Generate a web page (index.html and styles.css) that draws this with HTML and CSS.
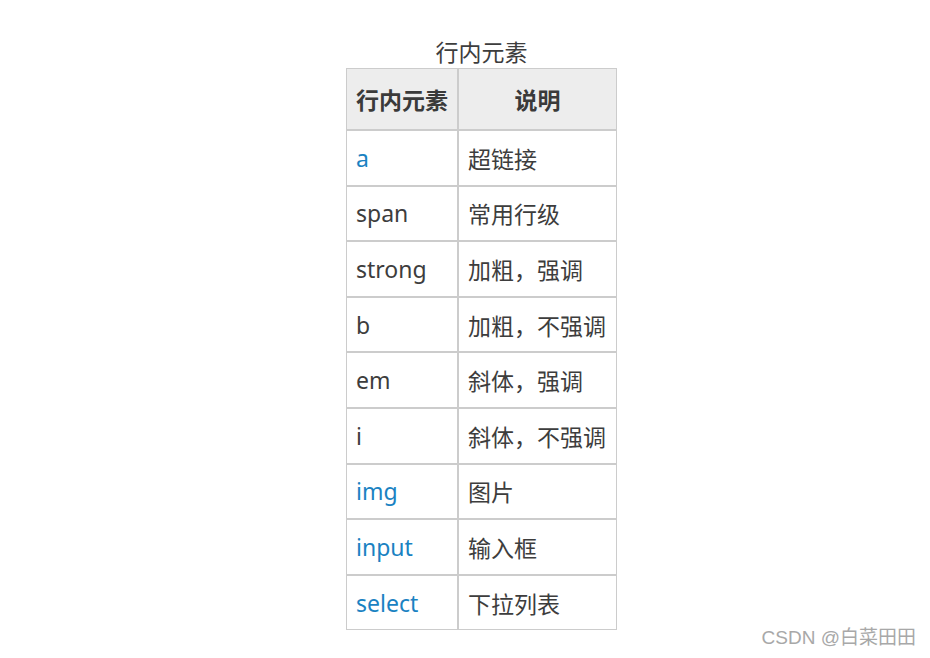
FILE: index.html
```html
<!DOCTYPE html>
<html lang="zh-CN">
<head>
<meta charset="utf-8">
<title>行内元素</title>
<link rel="stylesheet" href="styles.css">
</head>
<body>
<div class="page">
  <table class="tbl">
    <caption>行内元素</caption>
    <thead>
      <tr><th class="c1">行内元素</th><th class="c2">说明</th></tr>
    </thead>
    <tbody>
      <tr><td class="link">a</td><td>超链接</td></tr>
      <tr><td>span</td><td>常用行级</td></tr>
      <tr><td>strong</td><td>加粗，强调</td></tr>
      <tr><td>b</td><td>加粗，不强调</td></tr>
      <tr><td>em</td><td>斜体，强调</td></tr>
      <tr><td>i</td><td>斜体，不强调</td></tr>
      <tr><td class="link">img</td><td>图片</td></tr>
      <tr><td class="link">input</td><td>输入框</td></tr>
      <tr><td class="link">select</td><td>下拉列表</td></tr>
    </tbody>
  </table>
  <div class="wm">CSDN @白菜田田</div>
</div>
</body>
</html>
```
FILE: styles.css
```css
html, body {
  margin: 0;
  padding: 0;
  background: #fff;
}
.page {
  position: relative;
  width: 930px;
  height: 658px;
  box-sizing: border-box;
  padding: 36px 0 0 346px;
  font-family: "Noto Sans", "Noto Sans CJK SC", sans-serif;
  color: #3d3d3d;
}
.tbl {
  border-collapse: separate;
  border-spacing: 0;
  font-size: 23px;
}
.tbl caption {
  height: 32px;
  line-height: 32px;
  font-size: 23px;
  color: #3d3d3d;
  text-align: center;
}
.tbl th, .tbl td {
  border: 1px solid #cccccc;
  box-sizing: border-box;
  padding: 0 9px;
}
.tbl th {
  background: #ededed;
  height: 62px;
  font-weight: 700;
  text-align: center;
  color: #3a3a3a;
}
.tbl .c1 { width: 112px; }
.tbl .c2 { width: 159px; }
.tbl td {
  height: 55.6px;
  text-align: left;
  white-space: nowrap;
}
.tbl td.link {
  color: #1a82c2;
}
.wm {
  position: absolute;
  right: 14px;
  bottom: 9px;
  font-family: "Liberation Sans", "Noto Sans CJK SC", sans-serif;
  font-size: 19px;
  color: #a8a8a8;
}
```
